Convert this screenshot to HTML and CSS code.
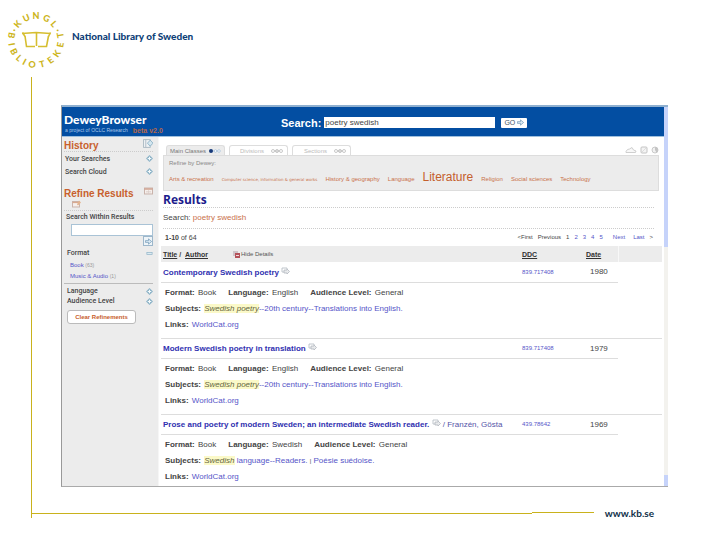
FILE: index.html
```html
<!DOCTYPE html>
<html lang="en">
<head>
    <meta charset="UTF-8">
    <meta name="viewport" content="width=device-width, initial-scale=1.0">
    <title>DeweyBrowser - National Library of Sweden</title>
    <link rel="stylesheet" href="styles.css">
</head>
<body>
    <!-- shared icons -->
    <svg class="defs" aria-hidden="true">
        <symbol id="plus" viewBox="0 0 8 8">
            <path d="M4 0L8 4L4 8L0 4Z" fill="#8fb4c8"/>
            <path d="M4 2V6M2 4H6" stroke="#f4fafc" stroke-width="1.2"/>
        </symbol>
        <symbol id="minus" viewBox="0 0 8 8">
            <rect x="1" y="3" width="6" height="2" fill="#dcebf2" stroke="#8fb4c8" stroke-width=".8"/>
        </symbol>
        <symbol id="arrow" viewBox="0 0 8 8">
            <path d="M0.5 3H4V1L7.5 4L4 7V5H0.5Z" fill="#dcebf5" stroke="#6f95b5" stroke-width=".8"/>
        </symbol>
        <symbol id="panel" viewBox="0 0 9 8">
            <rect x=".5" y="1" width="8" height="6" fill="#f6efec" stroke="#c9b3ab"/>
            <path d="M.5 2H8.5" stroke="#cf9f8c" stroke-width="1.4"/>
            <path d="M2 4.5H7M2 6H7M4.5 3V7" stroke="#d8cbc6" stroke-width=".6"/>
        </symbol>
        <symbol id="edit" viewBox="0 0 9 8">
            <rect x=".5" y="1.5" width="7" height="5.5" fill="#f6efec" stroke="#c9b3ab"/>
            <path d="M.5 2.5H7.5" stroke="#d9a98f" stroke-width="1.2"/>
            <path d="M7 .5L9 2.5L6 5.5L5 4.5Z" fill="#e3b48f"/>
        </symbol>
        <symbol id="log" viewBox="0 0 9 8">
            <rect x=".5" y=".5" width="6" height="7" fill="#eef1f3" stroke="#a9b8c2" stroke-width=".8"/>
            <path d="M2.5 0.5V7.5" stroke="#a9b8c2" stroke-width=".8"/>
            <path d="M6.5 1L9 3.7L6.5 6.4L4 3.7Z" fill="#d3e6ef" stroke="#7fa9c0" stroke-width=".7"/>
        </symbol>
        <symbol id="copy" viewBox="0 0 9 8">
            <path d="M6 2V1H1V5H3" fill="none" stroke="#b9bfc6" stroke-width=".9"/>
            <path d="M3 3H6V2L8.5 4.5L6 7V6H3Z" fill="#e8eaec" stroke="#b2b8bf" stroke-width=".8"/>
        </symbol>
        <symbol id="steps" viewBox="0 0 12 6">
            <path d="M2 3H10" stroke="#bbb" stroke-width=".8"/>
            <circle cx="2" cy="3" r="1.5" fill="#fff" stroke="#bbb" stroke-width=".8"/>
            <circle cx="6" cy="3" r="1.5" fill="#ddd" stroke="#bbb" stroke-width=".8"/>
            <circle cx="10" cy="3" r="1.5" fill="#fff" stroke="#bbb" stroke-width=".8"/>
        </symbol>
    </svg>

    <header class="brand">
        <svg class="brand-logo" viewBox="0 0 60 60" role="img" aria-label="Kungl. Biblioteket">
            <g class="logo-text">
                <text transform="rotate(-66 29 29)" x="29" y="8">·</text>
                <text transform="rotate(-49 29 29)" x="29" y="8">K</text>
                <text transform="rotate(-24 29 29)" x="29" y="8">U</text>
                <text transform="rotate(0 29 29)" x="29" y="8">N</text>
                <text transform="rotate(26 29 29)" x="29" y="8">G</text>
                <text transform="rotate(48 29 29)" x="29" y="8">L</text>
                <text transform="rotate(66 29 29)" x="29" y="8">·</text>
                <text transform="rotate(101 29 29)" x="29" y="57">B</text>
                <text transform="rotate(80 29 29)" x="29" y="57">I</text>
                <text transform="rotate(62 29 29)" x="29" y="57">B</text>
                <text transform="rotate(43 29 29)" x="29" y="57">L</text>
                <text transform="rotate(28 29 29)" x="29" y="57">I</text>
                <text transform="rotate(9 29 29)" x="29" y="57">O</text>
                <text transform="rotate(-14 29 29)" x="29" y="57">T</text>
                <text transform="rotate(-36 29 29)" x="29" y="57">E</text>
                <text transform="rotate(-57 29 29)" x="29" y="57">K</text>
                <text transform="rotate(-79 29 29)" x="29" y="57">E</text>
                <text transform="rotate(-101 29 29)" x="29" y="57">T</text>
            </g>
            <g class="logo-book">
                <path d="M15 22.5L29 21.5L43.5 22.5"/>
                <path d="M18 25L19.5 35.5H28M31 35.5H39.5L41.5 25"/>
                <path d="M29.5 22V35"/>
                <path d="M15.5 21.5L18 25.5M43.5 21.5L41.5 25.5"/>
            </g>
        </svg>
        <span class="brand-name">National Library of Sweden</span>
    </header>

    <div class="frame">
        <div class="browser">
            <div class="topbar">
                <div class="product">
                    <div class="product-name">DeweyBrowser</div>
                    <div class="product-sub"><span>a project of OCLC Research</span><span class="beta">beta v2.0</span></div>
                </div>
                <form class="search">
                    <label for="q">Search:</label>
                    <input type="text" id="q" value="poetry swedish">
                    <button type="button">GO <svg width="7" height="7"><use href="#arrow"/></svg></button>
                </form>
            </div>
            <div class="page">
                <aside class="sidebar">
                    <div class="side-head">
                        <h2>History</h2>
                        <svg width="10" height="9"><use href="#log"/></svg>
                    </div>
                    <div class="side-row">Your Searches <svg width="7" height="7"><use href="#plus"/></svg></div>
                    <div class="side-row">Search Cloud <svg width="7" height="7"><use href="#plus"/></svg></div>
                    <div class="side-head refine">
                        <h2>Refine Results</h2>
                        <svg width="9" height="8"><use href="#panel"/></svg>
                    </div>
                    <div class="side-edit"><svg width="9" height="8"><use href="#edit"/></svg></div>
                    <form class="within">
                        <label for="within">Search Within Results</label>
                        <input type="text" id="within">
                        <button type="button" aria-label="Search within results"><svg width="7" height="7"><use href="#arrow"/></svg></button>
                    </form>
                    <div class="facet">
                        <div class="facet-row">Format <svg width="7" height="7"><use href="#minus"/></svg></div>
                        <ul>
                            <li><a href="#">Book</a> <small>(63)</small></li>
                            <li><a href="#">Music &amp; Audio</a> <small>(1)</small></li>
                        </ul>
                    </div>
                    <div class="facet last">
                        <div class="facet-row">Language <svg width="7" height="7"><use href="#plus"/></svg></div>
                        <div class="facet-row">Audience Level <svg width="7" height="7"><use href="#plus"/></svg></div>
                    </div>
                    <button type="button" class="clear">Clear Refinements</button>
                </aside>
                <main class="main">
                    <div class="tabs">
                        <button type="button" class="tab active">Main Classes
                            <svg width="12" height="6" viewBox="0 0 12 6"><path d="M2 3H10" stroke="#a9c3dc" stroke-width=".8"/><circle cx="2" cy="3" r="2" fill="#16397a"/><circle cx="6.5" cy="3" r="1.3" fill="#fff" stroke="#a9c3dc" stroke-width=".8"/><circle cx="10" cy="3" r="1.3" fill="#fff" stroke="#a9c3dc" stroke-width=".8"/></svg>
                        </button>
                        <button type="button" class="tab">Divisions <svg width="12" height="6"><use href="#steps"/></svg></button>
                        <button type="button" class="tab">Sections <svg width="12" height="6"><use href="#steps"/></svg></button>
                        <div class="views">
                            <svg width="12" height="8" viewBox="0 0 12 8"><path d="M1 6.5H10.5L11 5L8.5 4L7 1.5L4.5 3L2.5 3.5L1 5.5Z" fill="#f8f8f8" stroke="#c9c9c9" stroke-width=".9"/></svg>
                            <svg width="8" height="8" viewBox="0 0 8 8"><rect x="1" y="1" width="6" height="6" rx="1" fill="#f4f4f4" stroke="#c4c4c4"/><path d="M2 6L6 2" stroke="#ddd"/></svg>
                            <svg width="8" height="8" viewBox="0 0 8 8"><circle cx="4" cy="4" r="3" fill="#f1f1f1" stroke="#c9c9c9"/><path d="M4 4V1A3 3 0 0 1 5.5 6.6Z" fill="#c4c4c4"/></svg>
                        </div>
                    </div>
                    <div class="classes">
                        <div class="classes-label">Refine by Dewey:</div>
                        <div class="cloud">
                            <a href="#">Arts &amp; recreation</a>
                            <a href="#" class="tiny">Computer science, information &amp; general works</a>
                            <a href="#">History &amp; geography</a>
                            <a href="#">Language</a>
                            <a href="#" class="big">Literature</a>
                            <a href="#">Religion</a>
                            <a href="#">Social sciences</a>
                            <a href="#">Technology</a>
                        </div>
                    </div>
                    <h1>Results</h1>
                    <p class="query">Search: <span>poetry swedish</span></p>
                    <div class="pager">
                        <div class="count"><b>1-10</b> of 64</div>
                        <div class="pages">
                            <span>&lt;First</span><span>Previous</span><span>1</span><a href="#">2</a><a href="#">3</a><a href="#">4</a><a href="#">5</a><a href="#" class="next">Next</a><a href="#">Last</a><span>&gt;</span>
                        </div>
                    </div>
                    <table class="results">
                        <colgroup><col><col class="col-ddc"><col class="col-date"><col class="col-end"></colgroup>
                        <thead>
                            <tr>
                                <th>
                                    <div class="head-title">
                                        <span><a href="#">Title</a> / &nbsp;<a href="#">Author</a></span>
                                        <button type="button" class="hide"><svg width="7" height="7" viewBox="0 0 7 7"><rect width="5" height="5" fill="#cfc4c9"/><rect x="2" y="2" width="5" height="5" fill="#b5525a"/><path d="M3 4.5H6" stroke="#fff" stroke-width=".8"/></svg>Hide Details</button>
                                    </div>
                                </th>
                                <th><a href="#">DDC</a></th>
                                <th><a href="#">Date</a></th>
                                <th></th>
                            </tr>
                        </thead>
                        <tbody>
                            <tr class="title">
                                <td><a href="#">Contemporary Swedish poetry</a> <svg width="9" height="8"><use href="#copy"/></svg></td>
                                <td class="ddc"><a href="#">839.717408</a></td>
                                <td class="date">1980</td>
                                <td></td>
                            </tr>
                            <tr class="detail">
                                <td colspan="4">
                                    <div class="meta"><span><b>Format:</b> Book</span><span><b>Language:</b> English</span><span><b>Audience Level:</b> General</span></div>
                                    <div><b>Subjects:</b> <a href="#"><mark>Swedish poetry</mark>--20th century--Translations into English.</a></div>
                                    <div><b>Links:</b> <a href="#">WorldCat.org</a></div>
                                </td>
                            </tr>
                            <tr class="title">
                                <td><a href="#">Modern Swedish poetry in translation</a> <svg width="9" height="8"><use href="#copy"/></svg></td>
                                <td class="ddc"><a href="#">839.717408</a></td>
                                <td class="date">1979</td>
                                <td></td>
                            </tr>
                            <tr class="detail">
                                <td colspan="4">
                                    <div class="meta"><span><b>Format:</b> Book</span><span><b>Language:</b> English</span><span><b>Audience Level:</b> General</span></div>
                                    <div><b>Subjects:</b> <a href="#"><mark>Swedish poetry</mark>--20th century--Translations into English.</a></div>
                                    <div><b>Links:</b> <a href="#">WorldCat.org</a></div>
                                </td>
                            </tr>
                            <tr class="title">
                                <td><a href="#">Prose and poetry of modern Sweden; an intermediate Swedish reader.</a> <svg width="9" height="8"><use href="#copy"/></svg> <span class="author">/ Franzén, Gösta</span></td>
                                <td class="ddc"><a href="#">439.78642</a></td>
                                <td class="date">1969</td>
                                <td></td>
                            </tr>
                            <tr class="detail">
                                <td colspan="4">
                                    <div class="meta"><span><b>Format:</b> Book</span><span><b>Language:</b> Swedish</span><span><b>Audience Level:</b> General</span></div>
                                    <div><b>Subjects:</b> <a href="#"><mark>Swedish</mark> language--Readers.</a> <span class="sep">|</span> <a href="#">Poésie suédoise.</a></div>
                                    <div><b>Links:</b> <a href="#">WorldCat.org</a></div>
                                </td>
                            </tr>
                        </tbody>
                    </table>
                </main>
                <div class="scroll">
                    <div class="scroll-thumb"></div>
                    <div class="scroll-end"></div>
                </div>
            </div>
        </div>
        <footer class="foot">
            <div class="line"></div>
            <div class="line short"></div>
            <a href="#">www.kb.se</a>
        </footer>
    </div>
</body>
</html>
```
FILE: styles.css
```css
*{
    box-sizing:border-box;
}
body{
    margin:0;
    background:#fff;
    color:#444;
    font-family:"Liberation Sans", Arial, sans-serif;
    font-size:8px;
}
a{
    color:#5555c8;
    text-decoration:none;
}
button, input{
    font-family:inherit;
    margin:0;
    padding:0;
}
svg{
    display:block;
}
.defs{
    display:none;
}

/* library header */
.brand{
    display:flex;
    height:77px;
    padding:11px 0 0 7px;
}
.brand-logo{
    width:60px;
    height:60px;
    overflow:visible;
}
.logo-text{
    fill:#cdb51c;
    font-family:Lato, sans-serif;
    font-size:9px;
    font-weight:900;
    text-anchor:middle;
}
.logo-book{
    fill:none;
    stroke:#d6be30;
    stroke-width:1.6;
}
.brand-name{
    padding:18px 0 0 5px;
    color:#0f3f78;
    font-family:Lato, sans-serif;
    font-size:10px;
    font-weight:900;
    line-height:15px;
}

/* rule on the left and bottom */
.frame{
    margin-left:31px;
    padding-top:28px;
    border-left:1px solid #c9b21c;
}
.browser{
    margin:0 52px 0 29px;
    border-top:2px solid #8fb0d0;
    border-bottom:1px solid #aaa;
    border-left:1px solid #999;
}
.topbar{
    display:flex;
    height:30px;
    margin-right:4px;
    background:#034ea2;
    border-bottom:1px solid #9fc0de;
    color:#fff;
}
.product{
    width:219px;
    padding:5px 0 0 2px;
}
.product-name{
    font-family:Lato, sans-serif;
    font-size:12px;
    font-weight:900;
    line-height:15px;
}
.product-sub{
    display:flex;
    gap:5px;
    padding-left:1px;
    color:#a9c6e8;
    font-size:5px;
    line-height:7px;
}
.beta{
    color:#b5674a;
    font-size:7px;
    font-weight:bold;
}
.search{
    display:flex;
    align-items:center;
    flex:1;
    padding-top:2px;
}
.search label{
    font-size:11px;
    font-weight:bold;
}
.search input{
    width:171px;
    height:11px;
    margin:0 6px 0 3px;
    padding:0 1px;
    border:0;
    background:#fff;
    color:#444;
    font-size:8px;
}
.search button{
    display:flex;
    align-items:center;
    justify-content:center;
    gap:2px;
    width:26px;
    height:10px;
    border:0;
    border-radius:1px;
    background:#fff;
    color:#456;
    font-size:7px;
}
.page{
    display:flex;
}

/* sidebar */
.sidebar{
    width:97px;
    padding:2px 5px 0 2px;
    background:#ececec;
    border-right:1px solid #f6f6f6;
    font-size:7px;
}
.side-head{
    display:flex;
    justify-content:space-between;
    height:13px;
    border-bottom:1px dotted #ccc;
}
.side-head h2{
    margin:0;
    color:#c8602c;
    font-size:10px;
    line-height:13px;
}
.side-row, .facet-row{
    display:flex;
    align-items:center;
    justify-content:space-between;
    font-family:Roboto, sans-serif;
    font-weight:500;
}
.side-row{
    height:13px;
    padding-left:1px;
}
.side-head.refine{
    margin-top:9px;
    border:0;
}
.side-edit{
    padding:0 0 2px 8px;
    border-bottom:1px dotted #ccc;
}
.within{
    display:flex;
    flex-direction:column;
    align-items:flex-end;
}
.within label{
    align-self:stretch;
    padding-left:2px;
    font-family:Roboto, sans-serif;
    font-weight:500;
    line-height:13px;
}
.within input{
    width:82px;
    height:12px;
    border:1px solid #a9c3d6;
    background:#fff;
    font-size:7px;
}
.within button{
    display:flex;
    align-items:center;
    justify-content:center;
    width:10px;
    height:10px;
    border:1px solid #9db7cb;
    background:#eef4f8;
}
.facet{
    margin-top:2px;
    padding-left:3px;
    border-bottom:1px solid #bbb;
}
.facet-row{
    height:10px;
}
.facet ul{
    margin:0;
    padding:2px 0 1px 3px;
    list-style:none;
    font-size:6px;
    line-height:11px;
}
.facet small{
    color:#999;
    font-size:5px;
}
.facet.last{
    border:0;
}
.clear{
    display:block;
    width:69px;
    height:14px;
    margin:4px 0 0 3px;
    border:1px solid #bbb;
    border-radius:3px;
    background:#fff;
    color:#c8602c;
    font-size:6px;
    font-weight:bold;
}

/* main part */
.main{
    flex:1;
    min-width:0;
    padding:8px 2px 0 2px;
}
.tabs{
    display:flex;
    gap:4px;
    height:10px;
    margin:0 3px 0 5px;
}
.tab{
    display:flex;
    align-items:center;
    justify-content:center;
    gap:3px;
    width:59px;
    border:1px solid #ddd;
    border-bottom:0;
    border-radius:3px 3px 0 0;
    background:#fff;
    color:#bbb;
    font-size:6px;
}
.tab:nth-child(n+2){
    justify-content:flex-end;
    gap:7px;
    padding-right:4px;
}
.tab.active{
    background:#ececec;
    color:#777;
}
.views{
    display:flex;
    align-items:center;
    gap:3px;
    margin-left:auto;
}
.classes{
    height:36px;
    margin:0 3px 0 2px;
    padding:3px 5px 0 5px;
    border:1px solid #ddd;
    background:#ececec;
}
.classes-label{
    color:#888;
    font-size:6px;
    line-height:8px;
}
.cloud{
    display:flex;
    align-items:baseline;
    gap:8px;
    padding-top:1px;
    line-height:18px;
    white-space:nowrap;
}
.cloud a{
    color:#c9714a;
    font-size:6px;
}
.cloud .tiny{
    font-family:"DejaVu Sans", sans-serif;
    font-size:4px;
}
.cloud .big{
    color:#c4602c;
    font-size:12px;
}
h1{
    margin:0 8px 0 2px;
    padding-top:2px;
    border-bottom:1px dotted #ccc;
    color:#1c1c8c;
    font-family:"Open Sans", sans-serif;
    font-size:12px;
    line-height:14px;
}
.query{
    margin:0 8px 0 2px;
    border-bottom:1px dotted #ccc;
    line-height:20px;
}
.query span{
    color:#c9714a;
}
.pager{
    display:flex;
    justify-content:space-between;
    padding:0 9px 0 4px;
    font-size:6px;
    line-height:17px;
}
.count{
    font-size:7px;
}
.pages{
    display:flex;
    gap:5px;
}
.pages .next{
    margin:0 3px 0 5px;
}
.results{
    width:100%;
    border-collapse:collapse;
    table-layout:fixed;
}
.col-ddc{
    width:64px;
}
.col-date{
    width:34px;
}
.col-end{
    width:44px;
}
.results th{
    height:16px;
    padding:0 0 0 2px;
    background:#ececec;
    font-size:7px;
    text-align:left;
}
.results th a{
    color:#333;
    text-decoration:underline;
}
.results th:nth-child(4){
    border-left:1px solid #f8f8f8;
}
.head-title{
    display:flex;
    align-items:center;
    gap:25px;
}
.hide{
    display:flex;
    align-items:center;
    gap:1px;
    border:0;
    background:none;
    color:#555;
    font-size:6px;
}
.results td{
    padding:0 0 0 2px;
}
.title td{
    height:20px;
    border-bottom:1px solid #ddd;
    white-space:nowrap;
}
.title td:last-child{
    border:0;
}
.title td:first-child a{
    color:#3030b0;
    font-weight:bold;
}
.title svg{
    display:inline-block;
}
.title .author{
    color:#5555a8;
}
.title .ddc{
    font-size:6px;
}
.title .date{
    padding-left:6px;
}
.results .detail td{
    padding:2px 0 5px 4px;
    border-bottom:1px solid #ddd;
    line-height:16px;
}
.results .detail:last-child td{
    border:0;
    padding-bottom:1px;
}
.meta{
    display:flex;
    gap:12px;
}
.detail b{
    margin-right:1px;
}
mark{
    background:#fbf9c8;
    color:#666640;
    font-style:italic;
}
.sep{
    font-size:6px;
}

/* scrollbar */
.scroll{
    display:flex;
    flex-direction:column;
    justify-content:space-between;
    width:4px;
    margin-top:-30px;
    background:#f3f2ee;
}
.scroll-thumb{
    height:140px;
    background:#c6d3fa;
}
.scroll-end{
    height:11px;
    background:#c6d3fa;
}

.foot{
    display:flex;
    align-items:center;
    height:31px;
    padding:22px 66px 0 0;
}
.line{
    flex:1;
    height:2px;
    border-bottom:1px solid #c9b21c;
}
.line.short{
    flex:0 0 62px;
    border-top:1px solid #c9b21c;
    border-bottom:0;
}
.foot a{
    margin-left:11px;
    color:#0f3048;
    font-family:Lato, sans-serif;
    font-size:10px;
    font-weight:bold;
    line-height:12px;
}
```
